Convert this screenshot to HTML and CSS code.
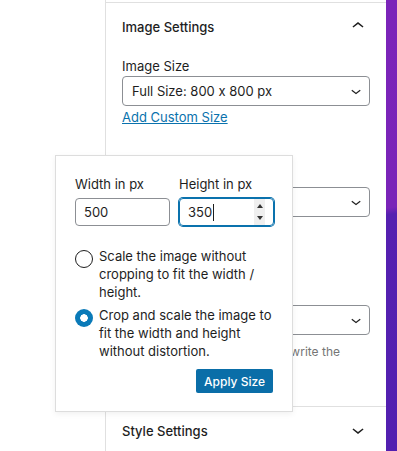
FILE: index.html
```html
<!DOCTYPE html>
<html lang="en">
<head>
    <meta charset="UTF-8">
    <meta name="viewport" content="width=device-width, initial-scale=1.0">
    <title>Image Settings</title>
    <link rel="stylesheet" href="styles.css">
</head>
<body>
    <div class="screen">
        <div class="canvas"></div>

        <aside class="sidebar">
            <div class="panel-prev"></div>

            <section class="panel panel-open">
                <h2 class="panel-title">
                    Image Settings
                    <svg class="chevron" viewBox="0 0 24 24" width="24" height="24"><path d="M6.5 12.4L12 8l5.5 4.4-.9 1.2L12 10l-4.6 3.6-1-1.2z"/></svg>
                </h2>
                <div class="panel-body">
                    <label class="field-label">Image Size</label>
                    <div class="select">
                        <span>Full Size: 800 x 800 px</span>
                        <svg viewBox="0 0 24 24" width="20" height="20"><path d="M17.5 11.6L12 16l-5.5-4.4.9-1.2L12 14l4.6-3.6 1 1.2z"/></svg>
                    </div>
                    <a class="link" href="#">Add Custom Size</a>

                    <!-- fields under the popover -->
                    <div class="select select-link">
                        <span>Link to Media Gallery</span>
                        <svg viewBox="0 0 24 24" width="20" height="20"><path d="M17.5 11.6L12 16l-5.5-4.4.9-1.2L12 14l4.6-3.6 1 1.2z"/></svg>
                    </div>

                    <div class="select select-crop">
                        <span></span>
                        <svg viewBox="0 0 24 24" width="20" height="20"><path d="M17.5 11.6L12 16l-5.5-4.4.9-1.2L12 14l4.6-3.6 1 1.2z"/></svg>
                    </div>
                    <p class="help">Images will be resized to overwrite the default size.</p>
                </div>
            </section>

            <section class="panel">
                <h2 class="panel-title">
                    Style Settings
                    <svg class="chevron" viewBox="0 0 24 24" width="24" height="24"><path d="M17.5 11.6L12 16l-5.5-4.4.9-1.2L12 14l4.6-3.6 1 1.2z"/></svg>
                </h2>
            </section>
        </aside>

        <div class="accent"></div>

        <div class="popover">
            <div class="size-row">
                <div class="size-field">
                    <label class="field-label">Width in px</label>
                    <div class="num-input">500</div>
                </div>
                <div class="size-field">
                    <label class="field-label">Height in px</label>
                    <div class="num-input is-focused">
                        <span>350</span><span class="caret"></span>
                        <span class="spin"><i class="up"></i><i class="down"></i></span>
                    </div>
                </div>
            </div>

            <div class="radio-group">
                <label class="radio-option">
                    <span class="radio"></span>
                    <span>Scale the image without cropping to fit the width / height.</span>
                </label>
                <label class="radio-option">
                    <span class="radio checked"></span>
                    <span>Crop and scale the image to fit the width and height without distortion.</span>
                </label>
            </div>

            <div class="actions">
                <button class="button-primary">Apply Size</button>
            </div>
        </div>
    </div>
</body>
</html>
```

FILE: styles.css
```css
body {
    margin: 0;
    font-family: 'Inter', 'Noto Sans', sans-serif;
    font-size: 13px;
    font-feature-settings: "calt" 0;
    color: #1e1e1e;
    background-color: #fff;
}

.screen {
    position: relative;
    display: flex;
    height: 451px;
    overflow: hidden;
}

.canvas {
    width: 105px;
    flex-shrink: 0;
}

.sidebar {
    width: 281px;
    flex-shrink: 0;
    box-sizing: border-box;
    border-left: 1px solid #e0e0e0;
}

.accent {
    flex: 1;
    background: linear-gradient(172deg, #7b24b9 0, #7a24b8 46%, #5520b0 47.5%, #521fb0 100%);
}

.panel-prev {
    height: 2px;
    border-bottom: 1px solid #e0e0e0;
}

.panel {
    border-bottom: 1px solid #e0e0e0;
}

.panel-title {
    margin: 0;
    height: 48px;
    padding: 0 16px;
    display: flex;
    align-items: center;
    justify-content: space-between;
    font-size: 13px;
    font-weight: 500;
}

.chevron {
    fill: #1e1e1e;
    margin-top: -3px;
}

.panel-body {
    padding: 6px 16px 27px;
}

.field-label {
    display: block;
    line-height: 18px;
    margin-bottom: 1px;
}

.select {
    height: 30px;
    box-sizing: border-box;
    border: 1px solid #8c8f94;
    border-radius: 4px;
    padding: 0 3px 0 9px;
    display: flex;
    align-items: center;
    justify-content: space-between;
    white-space: nowrap;
}

.select svg {
    fill: #1e1e1e;
    flex-shrink: 0;
}

.select-link {
    margin-top: 61px;
}

.select-crop {
    margin-top: 88px;
}

.link {
    display: inline-block;
    margin-top: 2px;
    line-height: 18px;
    color: #0a72ad;
}

.help {
    margin: 8px 0 0;
    font-size: 12px;
    line-height: 18px;
    color: #757575;
}

.popover {
    position: absolute;
    left: 55px;
    top: 155px;
    width: 238px;
    box-sizing: border-box;
    padding: 19px 18px 18px 19px;
    background-color: #fff;
    border: 1px solid #ddd;
    box-shadow: 0 2px 6px rgba(0, 0, 0, 0.06);
}

.size-row {
    display: grid;
    grid-template-columns: 95px 95px;
    gap: 9px;
}

.size-field .field-label {
    margin-bottom: 5px;
}

.num-input {
    height: 28px;
    box-sizing: border-box;
    border: 1px solid #8c8f94;
    border-radius: 4px;
    padding: 0 8px;
    display: flex;
    align-items: center;
}

.num-input.is-focused {
    border-color: #0a72ad;
    box-shadow: 0 0 0 1px #0a72ad;
}

.caret {
    width: 1px;
    height: 17px;
    margin-left: 1px;
    background-color: #1e1e1e;
}

.spin {
    margin-left: auto;
    width: 11px;
    height: 26px;
    background-color: #efefef;
    display: flex;
    flex-direction: column;
    align-items: center;
    justify-content: center;
    gap: 8px;
}

.spin i {
    width: 0;
    height: 0;
    border-left: 3.5px solid transparent;
    border-right: 3.5px solid transparent;
}

.spin .up {
    border-bottom: 4px solid #333;
}

.spin .down {
    border-top: 4px solid #333;
}

.radio-group {
    margin-top: 21px;
    display: flex;
    flex-direction: column;
    gap: 5px;
}

.radio-option {
    display: flex;
    gap: 6px;
    line-height: 18px;
}

.radio {
    flex-shrink: 0;
    width: 18px;
    height: 18px;
    margin-top: 3px;
    box-sizing: border-box;
    border: 1.5px solid #1e1e1e;
    border-radius: 50%;
}

.radio.checked {
    border: none;
    background: radial-gradient(circle, #fff 0 3.5px, #0a7ab8 4px);
}

.actions {
    margin-top: 9px;
    display: flex;
    justify-content: flex-end;
}

.button-primary {
    height: 24px;
    padding: 0 8px;
    margin-right: 1px;
    border: 0;
    border-radius: 2px;
    background-color: #0a6ea8;
    color: #fff;
    font-family: inherit;
    font-size: 12px;
    font-weight: 500;
    cursor: pointer;
}
```
